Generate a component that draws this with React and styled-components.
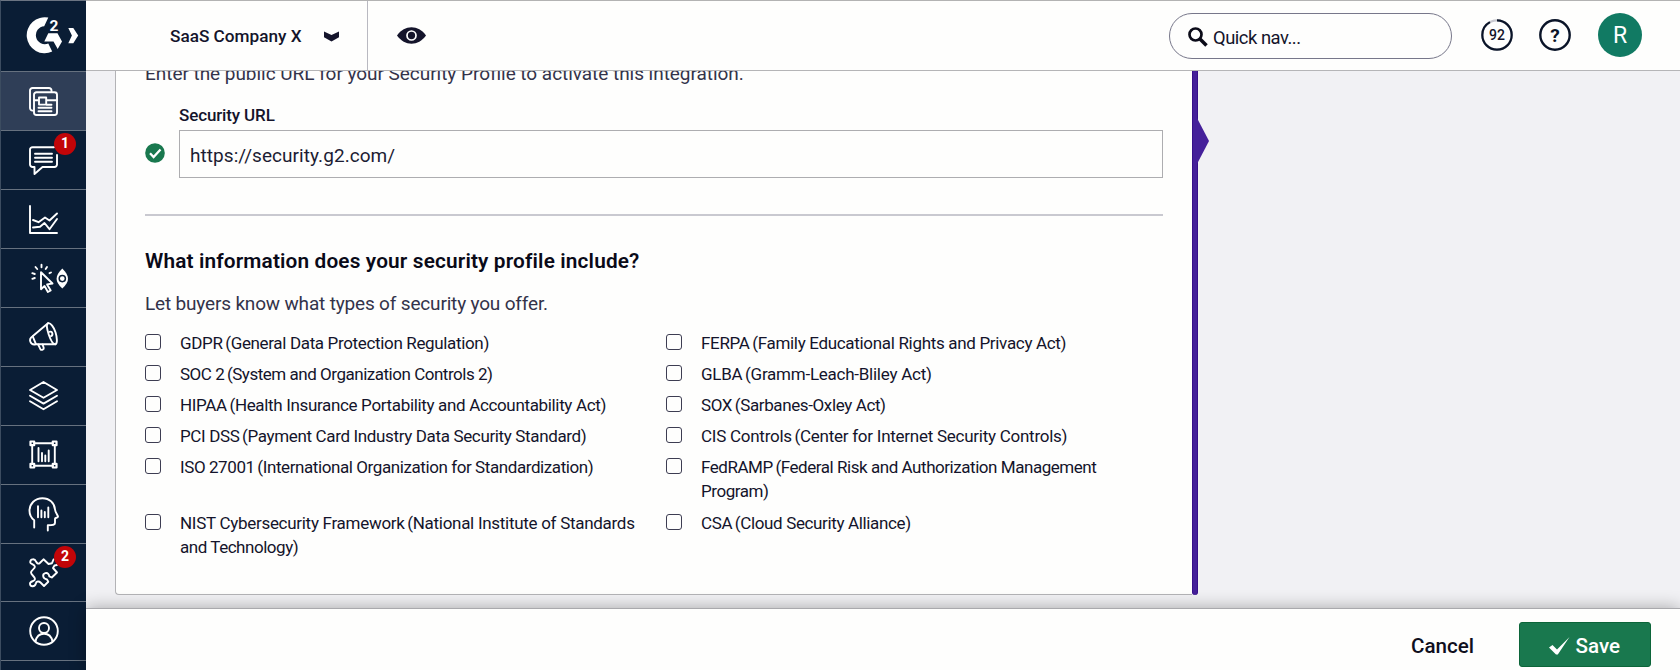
import React from "react";
import styled, { createGlobalStyle } from "styled-components";

const GlobalStyle = createGlobalStyle`
  *, *::before, *::after { box-sizing: border-box; }
  html, body { margin: 0; padding: 0; }
  body {
    font-family: Roboto, "Liberation Sans", sans-serif;
    color: #14142b;
    background: #f1f1f4;
    overflow: hidden;
  }
`;

const Text = styled.span`
  display: inline-block;
  white-space: nowrap;
  letter-spacing: ${(p) => p.$track || 0}px;
`;

const Shell = styled.div`
  display: flex;
  width: 1680px;
  height: 670px;
  overflow: hidden;
`;

/* ---------- sidebar ---------- */
const Sidebar = styled.nav`
  flex: 0 0 86px;
  background: #0a1d35;
  border-left: 1px solid #3c4c60;
  border-top: 1px solid #6b7482;
`;

const Brand = styled.div`
  height: 70.4px;
  padding: 15px 0 0 25px;
`;

const NavItem = styled.a`
  position: relative;
  display: flex;
  align-items: center;
  justify-content: center;
  height: 58.9px;
  border-top: 1px solid #66717f;
  background: ${(p) => (p.$active ? "#2f3e57" : "transparent")};
`;

const Badge = styled.span`
  position: absolute;
  top: 2px;
  left: 53px;
  width: 22px;
  height: 22px;
  border-radius: 50%;
  background: #c20508;
  color: #fff;
  font-size: 14px;
  font-weight: 700;
  line-height: 21px;
  text-align: center;
`;

const Line = styled.svg`
  display: block;
  fill: none;
  stroke: #fff;
  stroke-width: 1.9;
  stroke-linecap: round;
  stroke-linejoin: round;
  overflow: visible;
`;

/* ---------- header ---------- */
const Main = styled.div`
  flex: 1;
  display: flex;
  flex-direction: column;
  min-width: 0;
`;

const Header = styled.header`
  position: relative;
  z-index: 2;
  flex: 0 0 71px;
  display: flex;
  align-items: stretch;
  background: #fefefd;
  border-top: 1px solid #b3b3b3;
  border-bottom: 1px solid #b5b5b7;
`;

const Company = styled.div`
  display: flex;
  align-items: center;
  justify-content: space-between;
  width: 282px;
  padding: 1px 28px 0 84px;
  border-right: 1px solid #b9b9c1;
  font-size: 17.2px;
  font-weight: 500;
`;

const Preview = styled.div`
  display: flex;
  align-items: center;
  padding: 0 0 1px 29px;
`;

const Tools = styled.div`
  display: flex;
  align-items: center;
  margin-left: auto;
  padding: 0 38px 1px 0;
`;

const Search = styled.div`
  display: flex;
  align-items: center;
  width: 283px;
  height: 46px;
  margin: 2px 29px 0 0;
  padding: 2px 0 0 18px;
  gap: 5px;
  border: 1px solid #77778a;
  border-radius: 23px;
  font-size: 18.4px;
`;

const Round = styled.div`
  display: flex;
  margin-right: ${(p) => p.$gap}px;
`;

const Avatar = styled.div`
  width: 44px;
  height: 44px;
  border-radius: 50%;
  background: #117a63;
  color: #fff;
  font-size: 23px;
  line-height: 45px;
  text-align: center;
`;

/* ---------- content ---------- */
const Content = styled.main`
  flex: 1;
  display: flex;
  min-height: 0;
  padding: 0 0 13px 29px;
  background: #f1f1f4;
`;

const Card = styled.section`
  width: 1077px;
  padding: 0 29px;
  background: #fefefd;
  border: 1px solid #b3b3b6;
  border-width: 0 0 1px 1px;
  border-radius: 0 0 0 4px;
`;

const Marker = styled.div`
  position: relative;
  width: 6px;
  background: #45209a;
  border: 1px solid #37108a;
  border-width: 0 1px;
  border-radius: 0 0 3px 3px;
  &::after {
    content: "";
    position: absolute;
    left: 4px;
    top: 47px;
    border: solid transparent;
    border-width: 23px 0 23px 12px;
    border-left-color: #45209a;
  }
`;

const Intro = styled.p`
  margin: -9px 0 0;
  font-size: 19px;
  line-height: 24px;
  color: #33334a;
`;

const Field = styled.div`
  display: grid;
  grid-template-columns: 34px 1fr;
  margin-top: 19px;
`;

const FieldLabel = styled.label`
  grid-column: 2;
  height: 25px;
  font-size: 17px;
  font-weight: 500;
  line-height: 20px;
`;

const FieldStatus = styled.div`
  display: flex;
  align-items: center;
  padding-bottom: 3px;
`;

const FieldBox = styled.div`
  height: 48px;
  padding-left: 10px;
  border: 1px solid #adadb0;
  font-size: 19px;
  line-height: 49px;
  color: #1c1c33;
`;

const Rule = styled.hr`
  margin: 36px 0 31px;
  border: 0;
  height: 2px;
  background: #c9c9d0;
`;

const Heading = styled.h2`
  margin: 0;
  font-size: 20.8px;
  font-weight: 600;
  line-height: 28px;
  color: #0a0a18;
`;

const Lead = styled.p`
  margin: 15px 0 12.6px;
  font-size: 19px;
  line-height: 28px;
  color: #33334a;
`;

const Options = styled.div`
  display: grid;
  grid-template-columns: 521px 1fr;
  row-gap: 7.2px;
`;

const Option = styled.label`
  display: grid;
  grid-template-columns: 35px 1fr;
  font-size: 17px;
  line-height: 24px;
  color: #14142b;
`;

const OptionText = styled.span`
  display: flex;
  flex-direction: column;
  align-items: flex-start;
`;

const Gap = styled.span`
  letter-spacing: -1.6px;
`;

const Box = styled.span`
  width: 16px;
  height: 16px;
  margin-top: 3px;
  border: 1px solid #3d3d52;
  border-radius: 3px;
`;

/* ---------- footer ---------- */
const Footer = styled.footer`
  position: relative;
  z-index: 1;
  flex: 0 0 62px;
  display: flex;
  align-items: flex-start;
  justify-content: flex-end;
  padding: 13px 29px 0 0;
  background: #fefefd;
  border-top: 1px solid #a9a9ad;
  box-shadow: 0 0 16px rgba(0, 0, 0, 0.32);
  font-size: 20.6px;
  font-weight: 500;
`;

const Cancel = styled.button`
  margin-right: 45px;
  padding: 0;
  border: 0;
  background: none;
  font: inherit;
  line-height: 48px;
  color: #0f0f1e;
`;

const Save = styled.button`
  display: flex;
  align-items: center;
  gap: 6px;
  width: 132px;
  height: 45px;
  padding: 2px 0 0 28.5px;
  border: 1px solid #0c6539;
  border-radius: 3px;
  background: #19784e;
  color: #fff;
  font: inherit;
`;

const LogoIcon = () => (
  <svg width="54" height="38" viewBox="0 0 54 38" fill="#fff">
    <path d="M22.300 1.600A18 18 0 1 0 26.200 35.600L22.300 27.500A9 9 0 1 1 18.200 10.200Z" />
    <path d="M22.300 17.300H31.500L36 25.400L31.700 32.900L27.500 25.600H18.300Z" />
    <text x="23.600" y="14.500" fontSize="15.500" fontWeight="700" fontFamily="Roboto, sans-serif">2</text>
    <path d="M42.300 12h5l4.900 7.600-4.900 7.600h-5l3.600-7.600z" />
  </svg>
);

const icons = {
  news: (
    <Line width="29" height="29" viewBox="0 0 29 29">
      <path d="M4.400 23.600H3.500A2.500 2.500 0 0 1 1 21.100V3.500A2.500 2.500 0 0 1 3.500 1H20A2.500 2.500 0 0 1 22.500 3.500V4.500" />
      <rect x="5" y="5.200" width="23" height="22.800" rx="2.500" />
      <path d="M5 13.200H9.500M18 13.200H28M10 10.500H17.200V17.600H10ZM17.500 17.800H22.500M9.500 20.800H22.500M9.500 24.200H22.500" />
    </Line>
  ),
  chat: (
    <Line width="29" height="29" viewBox="0 0 29 29">
      <path d="M25 1.200H3.500A2.500 2.500 0 0 0 1 3.700V18.500A2.500 2.500 0 0 0 3.500 21H5.500V28L13.500 21H25.500A2.500 2.500 0 0 0 28 18.500V9" />
      <path d="M6 7.700H23M6 11.700H23M6 15.700H23" />
    </Line>
  ),
  chart: (
    <Line width="29" height="29" viewBox="0 0 29 29">
      <path d="M1 1V28H28" />
      <path d="M4 15L9.500 17.200L16 12.500L20.500 15.500L28 8.500M4 22.500L11 21.800L15.500 18L20.500 24.200L28 14" />
    </Line>
  ),
  cursor: (
    <Line width="29" height="29" viewBox="0 0 29 29">
      <path d="M12 8.200L23.500 19.500L18.100 20.400L21.700 26.500L18.900 28L15.500 22L12 25.200Z" />
      <path d="M3.300 9.200L5.800 10M6.500 3L8.200 5M12.500 .800V3.300M18 3L16.700 5M3.300 14.800L5.800 14M20.500 9.200L22 8.500" />
      <path fill="#fff" stroke="none" d="M33.300 4.600C37 8.600 39 11.500 39 14.700C39 18 37 20.800 33.300 24.500C29.600 20.800 27.600 18 27.600 14.700C27.600 11.500 29.600 8.600 33.300 4.600Z" />
      <circle cx="33.300" cy="14.600" r="3.100" stroke="#0a1d35" strokeWidth="1.500" />
    </Line>
  ),
  megaphone: (
    <Line width="29" height="29" viewBox="0 0 29 29">
      <path d="M19 1.200L3.600 14.200C.800 16 .500 17.500 1.400 19.800C2.300 22.300 3.800 23 6.800 22.300L26.500 22.200" />
      <path d="M19 1.200C21.500 .300 25 5.500 26.500 10.200C28.200 15.500 28.500 21.600 26.500 22.200C24.200 22.600 21.500 17.800 19.700 12.500C18 7.200 17.300 2.200 19 1.200Z" />
      <path d="M9.200 22.600L11.500 27.300C12.500 28.500 15.300 27.500 14.700 25.700L13.600 22.600M3.800 14.500L6.800 21.800M20.500 9.800C23.500 8.900 24.500 13 22 14.200" />
    </Line>
  ),
  layers: (
    <Line width="29" height="29" viewBox="0 0 29 29">
      <path d="M14.500 1L28 9L14.500 16.800L1 9ZM1 14.800L14.500 22.600L28 14.800M1 20.300L14.500 28.200L28 20.300" />
    </Line>
  ),
  frame: (
    <Line width="29" height="29" viewBox="0 0 29 29">
      <path d="M6 3.200H23M6 25.800H23M3.200 6V23M25.800 6V23" />
      <path strokeWidth="2.200" d="M1.500 1.500H5.200V5.200H1.500ZM23.800 1.500H27.500V5.200H23.800ZM1.500 23.800H5.200V27.500H1.500ZM23.800 23.800H27.500V27.500H23.800Z" />
      <path d="M9.500 8V21.200M13 13V21.200M16.300 15.500V21.200M19.700 10.500V21.200" />
    </Line>
  ),
  head: (
    <Line width="31" height="34" viewBox="0 0 31 34">
      <path d="M6.200 30.500V23.300C3 20.800 1.500 17.700 1.500 13.800C1.500 6.500 7.200 1.200 14.400 1.200C21.500 1.200 26.500 6 27 12.500C27.300 15.500 30 18.500 30 19.600C29.800 21 27 20.500 27 21.700V26C27 28 25 28.300 19.800 28.300V33.500" />
      <path d="M10 9.200V20.200M13.400 13.500V20.200M16.800 15V20.200M20.300 10.500V20.200" />
    </Line>
  ),
  puzzle: (
    <Line width="29" height="29" viewBox="0 0 29 29">
      <path d="M24.500 1.500L23 5.200L19.500 6L14.500 1.300L10.800 5C9.500 6.200 8.300 5.800 7 3.500C5.800 .300 1.300 .700 1.200 4.200C1.300 6.200 5.700 6 5.900 8.800C6 10.800 2 12 2 14.500C2 17 6 18.500 6 21C6 24 1 22.500 1 25.800C1.200 29.200 6 29 6.800 25.500C7.300 23 10 23 11.500 24.500L15 28L19.300 23.800L18 21.500C13.500 20.500 13 16.200 16.300 15.200C19 14.500 20 16.500 20.300 18.300L22.800 19.500L28 14.500L24 10L25.500 7.500L28 7" />
    </Line>
  ),
  user: (
    <Line width="30" height="30" viewBox="0 0 30 30">
      <circle cx="15" cy="15" r="13.800" />
      <circle cx="15" cy="12" r="5" />
      <path d="M6.500 25.500C7.500 20.500 10.500 17.800 15 17.800S22.500 20.500 23.500 25.500" />
    </Line>
  ),
};

const nav = [
  ["news"], ["chat", "1"], ["chart"], ["cursor"], ["megaphone"], ["layers"],
  ["frame"], ["head"], ["puzzle", "2"], ["user"],
];

/* Each option is a list of lines: name, detail, letter spacing. */
const options = [
  [["GDPR", "(General Data Protection Regulation)", -0.346]],
  [["FERPA", "(Family Educational Rights and Privacy Act)", -0.32]],
  [["SOC 2", "(System and Organization Controls 2)", -0.476]],
  [["GLBA", "(Gramm-Leach-Bliley Act)", -0.25]],
  [["HIPAA", "(Health Insurance Portability and Accountability Act)", -0.342]],
  [["SOX", "(Sarbanes-Oxley Act)", -0.38]],
  [["PCI DSS", "(Payment Card Industry Data Security Standard)", -0.357]],
  [["CIS Controls", "(Center for Internet Security Controls)", -0.258]],
  [["ISO 27001", "(International Organization for Standardization)", -0.414]],
  [["FedRAMP", "(Federal Risk and Authorization Management", -0.454], ["", "Program)", -0.46]],
  [["NIST Cybersecurity Framework", "(National Institute of Standards", -0.29], ["", "and Technology)", -0.46]],
  [["CSA", "(Cloud Security Alliance)", -0.36]],
];

export default function App() {
  return (
    <>
      <GlobalStyle />
      <Shell>
        <Sidebar>
          <Brand><LogoIcon /></Brand>
          {nav.map(([name, badge], i) => (
            <NavItem key={name} $active={i === 0}>
              {icons[name]}
              {badge && <Badge>{badge}</Badge>}
            </NavItem>
          ))}
          <NavItem />
        </Sidebar>
        <Main>
          <Header>
            <Company>
              <Text>SaaS Company X</Text>
              <svg width="15" height="11" viewBox="0 0 15 11" fill="#14142b"><path d="M0 .500L7.500 4L15 .500V6.200L7.500 10.500L0 6.200Z" /></svg>
            </Company>
            <Preview>
              <svg width="29" height="17" viewBox="0 0 29 17">
                <path fill="#14142b" d="M0 8.500C4 3 9 .300 14.500 .300S25 3 29 8.500C25 14 20 16.700 14.500 16.700S4 14 0 8.500Z" />
                <circle cx="14.500" cy="8.500" r="4.500" fill="#14142b" stroke="#fff" strokeWidth="1.700" />
              </svg>
            </Preview>
            <Tools>
              <Search>
                <svg width="20" height="20" viewBox="0 0 20 20" fill="none" stroke="#0b0b18"><circle cx="7.500" cy="7.500" r="6" strokeWidth="2.700" /><path d="M12 12L18.500 18.500" strokeWidth="3.600" /></svg>
                <Text $track={-0.48}>Quick nav...</Text>
              </Search>
              <Round $gap={26}>
                <svg width="32" height="32" viewBox="0 0 32 32">
                  <circle cx="16" cy="16" r="14.700" fill="none" stroke="#c9c9d0" strokeWidth="2.200" />
                  <circle cx="16" cy="16" r="14.700" fill="none" stroke="#0a1428" strokeWidth="2.200" pathLength="100" strokeDasharray="92 8" transform="rotate(-90 16 16)" />
                  <text x="16" y="21.200" textAnchor="middle" fontSize="14" fontWeight="500" fill="#14142b">92</text>
                </svg>
              </Round>
              <Round $gap={27}>
                <svg width="32" height="32" viewBox="0 0 32 32">
                  <circle cx="16" cy="16" r="14.700" fill="none" stroke="#0a1428" strokeWidth="2.400" />
                  <text x="16" y="22.800" textAnchor="middle" fontSize="19" fontWeight="700" fill="#0a1428">?</text>
                </svg>
              </Round>
              <Avatar>R</Avatar>
            </Tools>
          </Header>
          <Content>
            <Card>
              <Intro><Text $track={-0.04}>Enter the public URL for your Security Profile to activate this integration.</Text></Intro>
              <Field>
                <FieldLabel><Text $track={-0.13}>Security URL</Text></FieldLabel>
                <FieldStatus>
                  <svg width="20" height="20" viewBox="0 0 20 20"><circle cx="10" cy="10" r="9.800" fill="#19784e" /><path d="M5 10.300L8.600 14L15.500 6.500" fill="none" stroke="#fff" strokeWidth="2.300" /></svg>
                </FieldStatus>
                <FieldBox><Text $track={0.06}>https://security.g2.com/</Text></FieldBox>
              </Field>
              <Rule />
              <Heading><Text $track={0.15}>What information does your security profile include?</Text></Heading>
              <Lead><Text $track={-0.17}>Let buyers know what types of security you offer.</Text></Lead>
              <Options>
                {options.map((lines) => (
                  <Option key={lines[0][0]}>
                    <Box />
                    <OptionText>
                      {lines.map(([name, detail, track]) => (
                        <Text key={detail} $track={track}>
                          {name}{name && <Gap> </Gap>}{detail}
                        </Text>
                      ))}
                    </OptionText>
                  </Option>
                ))}
              </Options>
            </Card>
            <Marker />
          </Content>
          <Footer>
            <Cancel><Text>Cancel</Text></Cancel>
            <Save>
              <svg width="21" height="18" viewBox="0 0 21 18" fill="#fff"><path d="M0 10.500L3.500 8L8 12.500L20.500 0L8.800 17.500H7Z" /></svg>
              <Text>Save</Text>
            </Save>
          </Footer>
        </Main>
      </Shell>
    </>
  );
}
